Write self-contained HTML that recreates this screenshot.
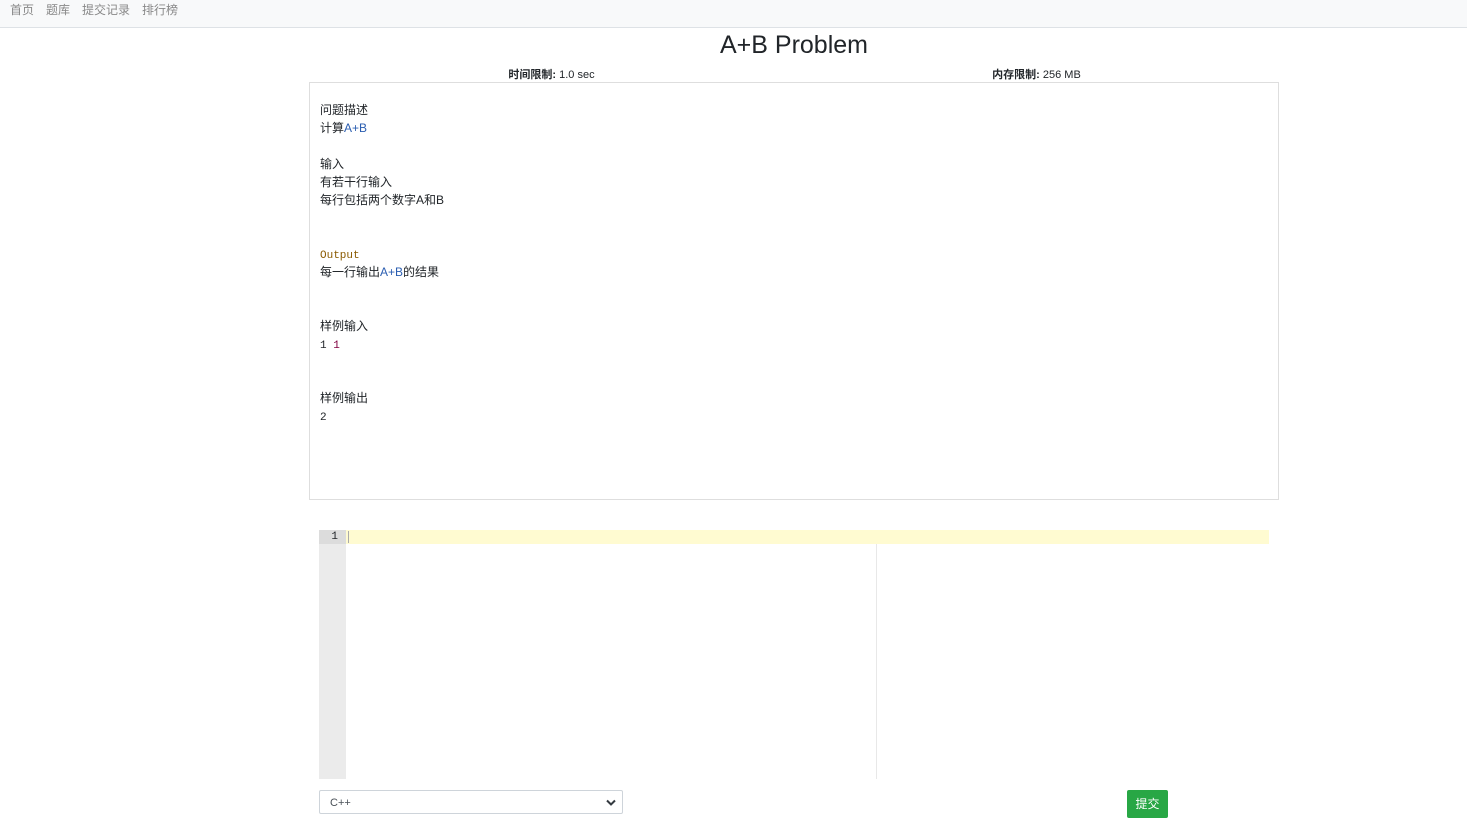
<!DOCTYPE html>
<html><head><meta charset="utf-8"><style>
body{margin:0;font-family:"Liberation Sans","Noto Sans CJK SC",sans-serif;color:#212529;background:#fff;}
.nav{height:28px;background:#f8f9fa;border-bottom:1px solid #dee2e6;box-sizing:border-box;font-size:12px;color:#888;}
.nav span{position:absolute;top:1px}
h1{position:absolute;top:30px;left:0;width:1588px;text-align:center;margin:0;font-size:25px;font-weight:500;line-height:30px}
.lim{position:absolute;top:66px;font-size:11px;width:485px;text-align:center}
.box{position:absolute;left:309px;top:82px;width:970px;height:418px;border:1px solid #dedede;box-sizing:border-box;padding:18px 10px;font-size:12px;line-height:18px}
.box div{height:18px;white-space:nowrap}
.m{font-family:"Liberation Mono",monospace;font-size:11px;line-height:16px}
.ed{position:absolute;left:319px;top:530px;width:950px;height:249px}
.gut{position:absolute;left:0;top:0;width:27px;height:249px;background:#ebebeb}
.act{position:absolute;left:27px;top:0;width:923px;height:14px;background:#fffbd1}
.ga{position:absolute;left:0;top:0;width:27px;height:14px;background:#dcdcdc;font-size:11px;line-height:15px;text-align:right;box-sizing:border-box;padding-right:8px;font-family:"Liberation Mono",monospace}
.cur{position:absolute;left:29px;top:1px;width:1px;height:12px;background:#aaa}
.pm{position:absolute;left:557px;top:14px;width:1px;height:235px;background:#e8e8e8}
.sel{position:absolute;left:319px;top:790px;width:304px;height:24px;border:1px solid #ced4da;border-radius:2px;box-sizing:border-box;font-size:11px;line-height:24px;padding-left:10px;color:#495057}
.btn{position:absolute;left:1127px;top:790px;width:41px;height:28px;background:#28a745;border-radius:2px;color:#fff;font-size:12px;line-height:28px;text-align:center}
</style></head><body>
<div class="nav"><span style="left:10px">首页</span><span style="left:46px">题库</span><span style="left:82px">提交记录</span><span style="left:142px">排行榜</span></div>
<h1>A+B Problem</h1>
<div class="lim" style="left:309px"><b>时间限制:</b> 1.0 sec</div>
<div class="lim" style="left:794px"><b>内存限制:</b> 256 MB</div>
<div class="box">
<div>问题描述</div><div>计算<span style="color:#2a5db0">A+B</span></div><div></div>
<div>输入</div><div>有若干行输入</div><div>每行包括两个数字A和B</div><div></div><div></div>
<div><span class="m" style="color:#8a5a00">Output</span></div><div>每一行输出<span style="color:#2a5db0">A+B</span>的结果</div><div></div><div></div>
<div>样例输入</div><div><span class="m">1 <span style="color:#800040">1</span></span></div><div></div><div></div>
<div>样例输出</div><div><span class="m">2</span></div></div>
<div class="ed"><div class="gut"></div><div class="act"></div><div class="ga">1</div><div class="cur"></div><div class="pm"></div></div>
<div class="sel">C++<svg style="position:absolute;right:6px;top:8px" width="10" height="8" viewBox="0 0 10 8"><path d="M1 1.5L5 5.5L9 1.5" stroke="#343a40" stroke-width="2" fill="none"/></svg></div>
<div class="btn">提交</div>
</body></html>
